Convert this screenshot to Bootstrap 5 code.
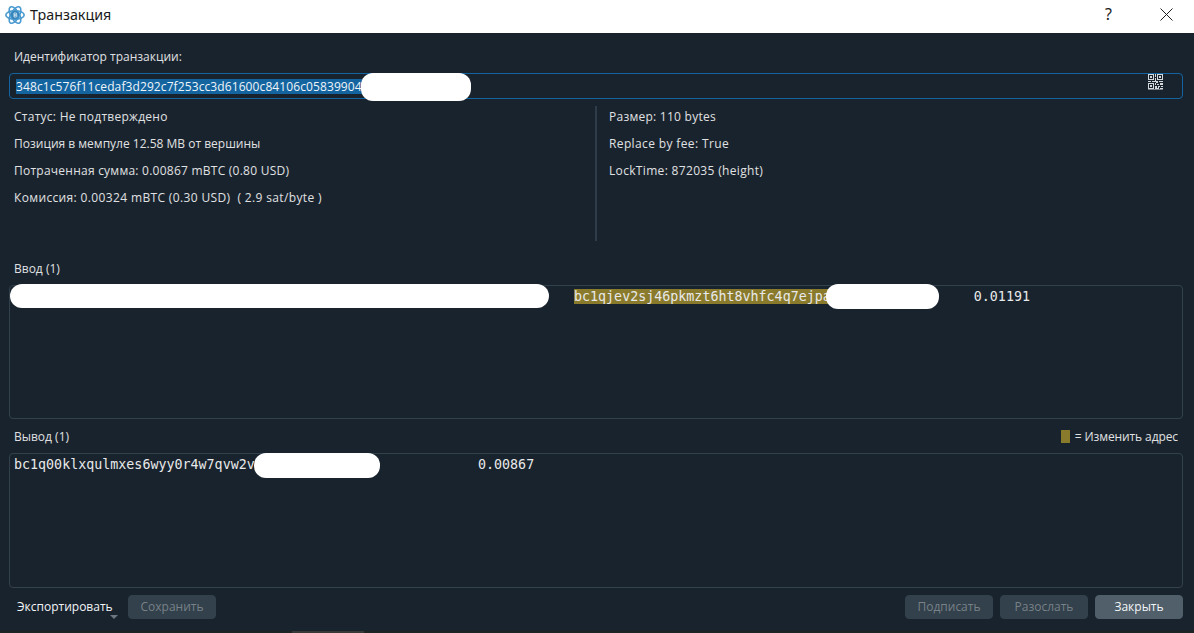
<!DOCTYPE html>
<html lang="ru">
<head>
<meta charset="utf-8">
<title>Транзакция</title>
<link href="https://cdn.jsdelivr.net/npm/bootstrap@5.3.0/dist/css/bootstrap.min.css" rel="stylesheet">
<style>
html,body{height:100%;overflow:hidden}
body{background:#19232d;color:#e0e1e3;font-family:"Open Sans","Noto Sans",sans-serif;font-size:12px;line-height:16px}
.win-bar{height:33px;background:#fff;color:#1a1a1a;font-size:15px;padding:0 0 3px 5px}
.win-title{margin-left:5px;font-family:"Noto Sans",sans-serif;font-size:14.3px}
.win-help{position:absolute;left:1105px;top:4px;font-size:16px;font-family:"Noto Sans",sans-serif;line-height:20px}
.win-close{position:absolute;left:1160px;top:8px}
.pane{padding:16px 11px 0 9px}
.field-label{padding-left:5px;height:16px}
.txid-box{position:relative;height:26px;margin-top:8px;border:1px solid #1464a0;border-radius:4px;padding:5px 6px;white-space:nowrap}
.txid-sel{background:#1464a0;color:#f0f4f8;display:inline-block;height:15px;line-height:15px;letter-spacing:.1px}
.blot{position:absolute;background:#fff;border-radius:12px}
.blot-txid{left:351px;top:-1px;width:110px;height:28px}
.blot-in-a{left:0;top:-2px;width:539px;height:24px}
.blot-in-b{left:816px;top:-2px;width:113px;height:25px}
.blot-out{left:244px;top:-1px;width:126px;height:25px}
.qr-mark{position:absolute;left:1138px;top:0}
.info-wrap{height:135px;margin-top:7px}
.info-left{width:586px;padding:3px 0 0 5px}
.info-right{border-left:2px solid #2f3c49;padding:3px 0 0 12px}
.info-line{height:16px;margin-bottom:11px;white-space:nowrap}
.ls-a{letter-spacing:.26px}
.ls-b{letter-spacing:.24px}
.ls-c{letter-spacing:.36px}
.ls-d{letter-spacing:.25px}
.ls-e{letter-spacing:.37px}
.ls-f{letter-spacing:.33px}
.sect-head{height:16px;padding-left:5px}
.sect-in{margin-top:20px}
.sect-out{margin-top:10px}
.addr-box{position:relative;border:1px solid #32414b;border-radius:4px;font-family:"DejaVu Sans Mono",monospace;font-size:13.33px;line-height:16px;color:#e8e9ea;white-space:pre}
.addr-in{height:134px;margin-top:8px;padding:3px 0 0 0}
.addr-out{height:135px;margin-top:8px;padding:3px 0 0 4px}
.addr-hl{background:#8a7a2c}
.in-addr{margin-left:564px}
.in-amt{margin-left:143px}
.out-addr{display:inline-block;width:464px}
.legend-swatch{display:inline-block;width:9px;height:13px;background:#8a7a2c;margin-right:5px;vertical-align:-2px}
.legend{padding-right:5px;letter-spacing:-.1px}
.foot-bar{margin-top:7px;height:24px}
.export-btn{position:relative;padding-left:8px;width:119px;color:#f2f5f8;font-size:12px}
.export-caret{position:absolute;left:101px;top:16px;width:0;height:0;border-left:4px solid transparent;border-right:4px solid transparent;border-top:4px solid #6c7680}
.act-gap{gap:7px}
.btn.act{width:88px;height:24px;padding:0;font-size:12px;line-height:22px;border-radius:4px;background:#32414b;border:1px solid #32414b;color:#788088;opacity:1}
.btn.act.on{background:#505f69;border-color:#505f69;color:#f2f5f8}
.edge-strip{height:2px;margin:12px -11px 0 -9px;padding-left:292px;background:#1d2524}
.edge-piece{width:72px;background:#383a38}
</style>
</head>
<body>
<div class="win-bar d-flex align-items-center">
  <svg width="20" height="20" viewBox="0 0 20 20" fill="none" stroke="#4a9ad0" stroke-width="1.6">
    <ellipse cx="10" cy="10" rx="9.2" ry="4.2"/>
    <ellipse cx="10" cy="10" rx="9.2" ry="4.2" transform="rotate(60 10 10)"/>
    <ellipse cx="10" cy="10" rx="9.2" ry="4.2" transform="rotate(120 10 10)"/>
    <circle cx="10" cy="10" r="4.2" fill="#3585bb" stroke="none"/>
    <path d="M9 8v4M9 8h1.8a1 1 0 0 1 0 2H9h2a1 1 0 0 1 0 2H9" stroke="#e4f2fb" stroke-width=".8"/>
  </svg>
  <span class="win-title">Транзакция</span>
  <span class="win-help">?</span>
  <svg class="win-close" width="13" height="13" viewBox="0 0 13 13" stroke="#222" stroke-width="1"><path d="M.5.5l12 12M12.5.5l-12 12"/></svg>
</div>
<div class="pane">
  <div class="field-label">Идентификатор транзакции:</div>
  <div class="txid-box">
    <span class="txid-sel">348c1c576f11cedaf3d292c7f253cc3d61600c84106c05839904</span>
    <span class="blot blot-txid"></span>
    <svg class="qr-mark" width="15" height="16" viewBox="0 0 15 16" fill="#d5d8db">
      <path fill-rule="evenodd" d="M0 0h6v6H0zM1 1v4h4V1zM9 0h6v6H9zM10 1v4h4V1zM0 9h6v6H0zM1 10v4h4v-4z"/>
      <path d="M2 2h2v2H2zM11 2h2v2h-2zM2 11h2v2H2zM7 0h1v3H7zM7 4h1v3H7zM0 7h3v1H0zM4 7h4v1H4zM8 7h2v2H8zM11 7h4v1h-4zM7 9h1v2H7zM9 10h2v1H9zM12 9h3v2h-3zM7 12h2v3H7zM10 12h2v1h-2zM13 12h2v1h-2zM9 14h2v1H9zM12 14h3v1h-3zM10 13h1v1h-1zM0 15h15v.6H0z"/>
    </svg>
  </div>
  <div class="info-wrap d-flex">
    <div class="info-left">
      <div class="info-line ls-a">Статус: Не подтверждено</div>
      <div class="info-line">Позиция в мемпуле 12.58 MB от вершины</div>
      <div class="info-line ls-b">Потраченная сумма: 0.00867 mBTC (0.80 USD)</div>
      <div class="info-line ls-c">Комиссия: 0.00324 mBTC (0.30 USD) &nbsp;( 2.9 sat/byte )</div>
    </div>
    <div class="info-right">
      <div class="info-line ls-d">Размер: 110 bytes</div>
      <div class="info-line ls-e">Replace by fee: True</div>
      <div class="info-line ls-f">LockTime: 872035 (height)</div>
    </div>
  </div>
  <div class="sect-head sect-in">Ввод (1)</div>
  <div class="addr-box addr-in"><span class="blot blot-in-a"></span><span class="in-addr addr-hl">bc1qjev2sj46pkmzt6ht8vhfc4q7ejpa</span><span class="blot blot-in-b"></span><span class="in-amt">0.01191</span></div>
  <div class="d-flex justify-content-between sect-head sect-out">
    <span>Вывод (1)</span>
    <span class="legend"><span class="legend-swatch"></span>= Изменить адрес</span>
  </div>
  <div class="addr-box addr-out"><span class="out-addr">bc1q00klxqulmxes6wyy0r4w7qvw2v</span><span class="blot blot-out"></span>0.00867</div>
  <div class="foot-bar d-flex align-items-center">
    <div class="export-btn">Экспортировать<span class="export-caret"></span></div>
    <button class="btn act" disabled>Сохранить</button>
    <div class="ms-auto d-flex act-gap">
      <button class="btn act" disabled>Подписать</button>
      <button class="btn act" disabled>Разослать</button>
      <button class="btn act on">Закрыть</button>
    </div>
  </div>
  <div class="edge-strip d-flex"><div class="edge-piece"></div></div>
</div>
<script src="https://cdn.jsdelivr.net/npm/bootstrap@5.3.0/dist/js/bootstrap.bundle.min.js"></script>
</body>
</html>
